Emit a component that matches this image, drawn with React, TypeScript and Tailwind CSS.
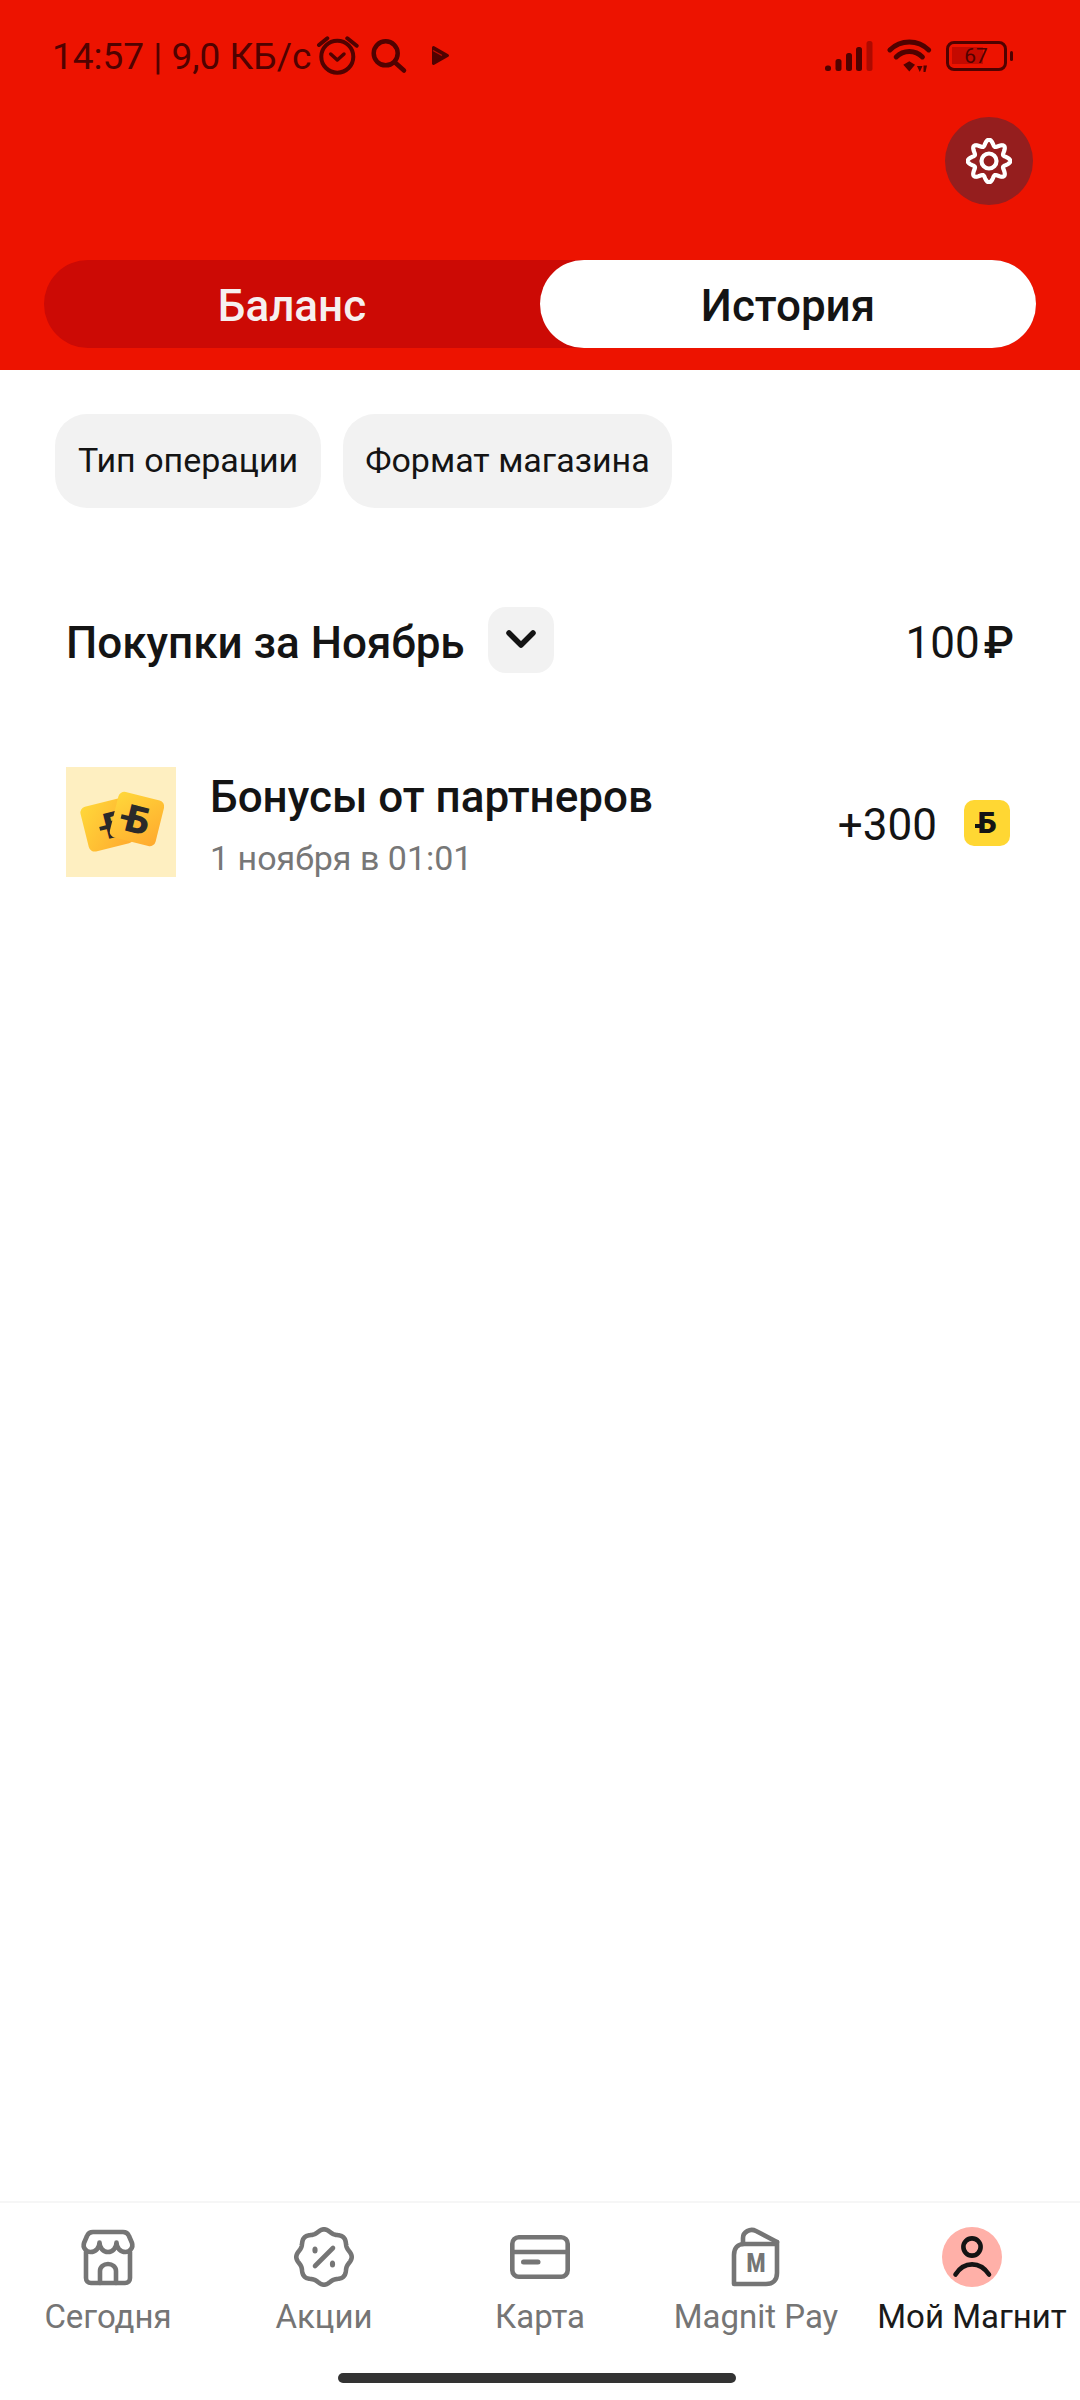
const wavy = (cx: number, cy: number, R: number, a: number, n: number) => {
  const pts: string[] = [];
  for (let i = 0; i < 240; i++) {
    const t = (i / 240) * Math.PI * 2;
    const r = R + a * Math.cos(n * t);
    pts.push(`${(cx + r * Math.sin(t)).toFixed(2)} ${(cy - r * Math.cos(t)).toFixed(2)}`);
  }
  return `M${pts.join("L")}Z`;
};

const DARK = "#500200";

function Alarm() {
  return (
    <svg width="44" height="44" viewBox="0 0 44 44" fill="none" stroke={DARK} strokeWidth="4" strokeLinecap="round" strokeLinejoin="round" className="ml-[4px]">
      <circle cx="22.3" cy="22.7" r="16" />
      <path d="M4 11L12.3 4.3M32.3 4.3L41.7 11.7" />
      <path d="M15.7 20L22.3 26L29 20" strokeWidth="3.5" />
    </svg>
  );
}
function Search() {
  return (
    <svg width="40" height="44" viewBox="0 0 40 44" fill="none" stroke={DARK} strokeWidth="4.5" strokeLinecap="round" className="ml-[10px]">
      <circle cx="16.7" cy="19.3" r="12" />
      <path d="M25.5 28L35 36.5" />
    </svg>
  );
}
function Play() {
  return (
    <svg width="22" height="44" viewBox="0 0 22 44" className="ml-[20px]">
      <path d="M4.5 13.5L18.5 21.5L4.5 29.5Z" fill={DARK} stroke={DARK} strokeWidth="3" strokeLinejoin="round" />
      <path d="M4 16.5L13 21.5" stroke="#c00c00" strokeWidth="1.4" />
    </svg>
  );
}
function Signal() {
  return (
    <svg width="48" height="30" viewBox="0 0 48 30" fill={DARK}>
      <rect x="0" y="24.5" width="6" height="5.5" rx="2.5" />
      <rect x="10.5" y="18" width="6" height="12" rx="2.5" />
      <rect x="21" y="12" width="6" height="18" rx="2.5" />
      <rect x="31" y="6" width="6" height="24" rx="2.5" />
      <rect x="41.5" y="0" width="6" height="30" rx="2.5" fill="#ad0a00" />
    </svg>
  );
}
function Wifi() {
  return (
    <svg width="50" height="40" viewBox="0 0 50 40" fill="none" stroke={DARK} strokeWidth="5" strokeLinecap="round" className="ml-[12px]">
      <path d="M4.9 13.9A27.5 27.5 0 0 1 43.7 13.9" />
      <path d="M11.2 20.9A18.5 18.5 0 0 1 37.4 20.9" />
      <path d="M18.3 28.8L24.3 25.3L30 28.8L24.3 35.5Z" fill={DARK} stroke="none" />
      <path d="M32 30H37.5L34.8 36Z M38.5 36V29.5H42L40.5 36Z" fill={DARK} stroke="none" />
    </svg>
  );
}
function Battery() {
  return (
    <div className="ml-[11px] flex items-center">
      <div className="relative flex h-[30px] w-[61px] items-center justify-center rounded-[8px] border-[3.5px] border-[#500200]">
        <div className="absolute left-[3px] top-[3px] h-[17px] w-[31px] bg-[#c40a00]" />
        <span className="relative text-[21px] leading-none font-normal text-[#500200]">67</span>
      </div>
      <div className="ml-[3px] h-[10px] w-[3.5px] rounded-full bg-[#500200]" />
    </div>
  );
}

function Gear() {
  return (
    <svg width="46" height="46" viewBox="0 0 46 46" fill="none" stroke="#ffffff" strokeWidth="4.2" strokeLinejoin="round">
      <path d={wavy(23, 23, 18.3, 3, 8)} />
      <circle cx="23" cy="23" r="7.5" />
    </svg>
  );
}

const GRAY = "#757575";

function Store() {
  return (
    <svg width="60" height="60" viewBox="0 0 60 60" fill="none" stroke={GRAY} strokeWidth="4.6" strokeLinecap="round" strokeLinejoin="round">
      <path d="M15 5H45C48 5 50 6.5 51 9L54 16C55.5 20.5 52 25 47.5 25C42.5 25 38.5 21 38.5 15.5C38.5 21 34.5 25 30 25C25.5 25 21.5 21 21.5 15.5C21.5 21 17.5 25 12.5 25C8 25 4.5 20.5 6 16L9 9C10 6.5 12 5 15 5Z" />
      <path d="M8 25V51C8 54 10 56 13 56H47C50 56 52 54 52 51V25" />
      <path d="M22 56V44C22 40 25.5 37 30 37C34.5 37 38 40 38 44V56" />
    </svg>
  );
}
function Percent() {
  return (
    <svg width="60" height="60" viewBox="0 0 60 60" fill="none" stroke={GRAY} strokeWidth="4.6" strokeLinecap="round" strokeLinejoin="round">
      <path d={wavy(30, 30, 26.2, 1.5, 8)} />
      <path d="M21 39L39 21" />
      <ellipse cx="21" cy="23" rx="2.6" ry="3.5" fill={GRAY} stroke="none" />
      <ellipse cx="38.5" cy="37" rx="2.6" ry="3.5" fill={GRAY} stroke="none" />
    </svg>
  );
}
function CardIcon() {
  return (
    <svg width="60" height="60" viewBox="0 0 60 60" fill="none" stroke={GRAY} strokeWidth="4.6" strokeLinecap="round">
      <rect x="2.3" y="10.3" width="55.4" height="39.4" rx="6.5" />
      <path d="M3 25H57" />
      <path d="M13.5 35H28" strokeWidth="5" />
    </svg>
  );
}
function Bag() {
  return (
    <svg width="60" height="60" viewBox="0 0 60 60" fill="none" stroke={GRAY} strokeWidth="4.6" strokeLinecap="round" strokeLinejoin="round">
      <path d="M51 15V46C51 53 47 57 40 57H8V28C8 21 12 17 18 17H51" />
      <path d="M17 17V11C17 5 24 1 30 4L51 15" />
      <text x="20.5" y="45" fontFamily="Roboto" fontWeight="900" fontSize="25" textLength="19" lengthAdjust="spacingAndGlyphs" fill={GRAY} stroke="none">
        М
      </text>
    </svg>
  );
}
function Person() {
  return (
    <div className="h-[60px] w-[60px] rounded-full bg-[#ffb0a8]">
      <svg width="60" height="60" viewBox="0 0 60 60" fill="none" stroke="#141414" strokeWidth="4.6" strokeLinecap="round">
        <circle cx="30" cy="20" r="8.6" />
        <path d="M13.5 47.5C22 34 38 34 47 47.5" />
      </svg>
    </div>
  );
}

function BonusArt() {
  return (
    <div className="h-[110px] w-[110px] shrink-0 bg-[#feefc1]">
      <svg width="110" height="110" viewBox="0 0 110 110">
        <defs>
          <linearGradient id="cardGrad" x1="0" y1="0" x2="1" y2="1">
            <stop offset="0" stopColor="#ffd83a" />
            <stop offset="1" stopColor="#ffa92e" />
          </linearGradient>
        </defs>
        <g transform="rotate(-14 41 58)">
          <rect x="18" y="35" width="46" height="46" rx="6" fill="url(#cardGrad)" />
          <text x="49" y="72" textAnchor="middle" fontFamily="Roboto" fontWeight="900" fontSize="36" fill="#2a2a2a">
            Б
          </text>
          <rect x="33" y="58" width="10" height="4" fill="#2a2a2a" />
        </g>
        <g transform="rotate(14 71 52)">
          <rect x="47.5" y="28.5" width="47" height="47" rx="6" fill="url(#cardGrad)" />
          <text x="72" y="66" textAnchor="middle" fontFamily="Roboto" fontWeight="900" fontSize="38" fill="#2a2a2a">
            Б
          </text>
          <rect x="55" y="51" width="10" height="4.5" fill="#2a2a2a" />
        </g>
      </svg>
    </div>
  );
}

function NavItem({ label, active, children }: { label: string; active?: boolean; children: React.ReactNode }) {
  return (
    <div className="flex flex-col items-center pt-[24px]">
      <div className="h-[60px] w-[60px]">{children}</div>
      <span className={`mt-[9px] whitespace-nowrap text-[33px] leading-[42px] ${active ? "text-[#1a1a1a]" : "text-[#757575]"}`}>{label}</span>
    </div>
  );
}

export default function App() {
  return (
    <div className="flex h-[2400px] w-[1080px] flex-col bg-white font-['Roboto',sans-serif] text-[#141414]">
      <header className="bg-[#ed1300] pb-[22px]">
        <div className="flex h-[112px] items-center pl-[52px] pr-[67px]">
          <span className="whitespace-nowrap text-[37px] leading-none text-[#500200]">14:57 | 9,0 КБ/с</span>
          <Alarm />
          <Search />
          <Play />
          <div className="ml-auto flex items-center">
            <Signal />
            <Wifi />
            <Battery />
          </div>
        </div>
        <div className="mt-[5px] flex justify-end pr-[47px]">
          <div className="flex h-[88px] w-[88px] items-center justify-center rounded-full bg-[#951e1e]">
            <Gear />
          </div>
        </div>
        <div className="mx-[44px] mt-[55px] flex h-[88px] rounded-full bg-[#cc0a05] text-[44px] font-medium">
          <div className="flex flex-1 items-center justify-center pt-[4px] text-[#f6efef]">Баланс</div>
          <div className="flex flex-1 items-center justify-center rounded-full bg-white pt-[4px] text-[#141414]">История</div>
        </div>
      </header>

      <main className="flex-1">
        <div className="ml-[55px] mt-[44px] flex gap-[22px]">
          <div className="flex h-[94px] items-center rounded-[32px] bg-[#f2f2f2] px-[23px] pb-[2px] text-[34px]">Тип операции</div>
          <div className="flex h-[94px] items-center rounded-[32px] bg-[#f2f2f2] px-[22px] pb-[2px] text-[34px]">Формат магазина</div>
        </div>

        <div className="mt-[99px] flex h-[66px] items-center pl-[66px] pr-[66px]">
          <span className="mt-[5px] text-[44px] font-medium leading-none">Покупки за Ноябрь</span>
          <div className="ml-[23px] flex h-[66px] w-[66px] items-center justify-center rounded-[18px] bg-[#f2f2f2]">
            <svg width="34" height="24" viewBox="0 0 34 24" fill="none" stroke="#141414" strokeWidth="5.5" strokeLinecap="round" strokeLinejoin="round">
              <path d="M5 5L17 17L29 5" />
            </svg>
          </div>
          <span className="ml-auto mt-[5px] flex items-baseline gap-[4px] text-[44px] leading-none">
            100<span className="font-medium">₽</span>
          </span>
        </div>

        <div className="ml-[66px] mr-[70px] mt-[94px] flex items-center">
          <BonusArt />
          <div className="ml-[34px] flex flex-col self-start pt-[5px]">
            <span className="text-[44px] font-medium leading-[50px]">Бонусы от партнеров</span>
            <span className="mt-[17px] text-[34px] leading-[38px] text-[#777777]">1 ноября в 01:01</span>
          </div>
          <span className="ml-auto mt-[6px] text-[44px] leading-none">+300</span>
          <div className="relative ml-[27px] mt-[2px] flex h-[46px] w-[46px] items-center justify-center rounded-[10px] bg-[#ffd733] text-[30px] font-black leading-none">
            Б
            <div className="absolute left-[11px] top-[24px] h-[3.5px] w-[7px] bg-[#141414]" />
          </div>
        </div>
      </main>

      <nav className="border-t-2 border-[#f6f6f6]">
        <div className="grid grid-cols-5">
          <NavItem label="Сегодня"><Store /></NavItem>
          <NavItem label="Акции"><Percent /></NavItem>
          <NavItem label="Карта"><CardIcon /></NavItem>
          <NavItem label="Magnit Pay"><Bag /></NavItem>
          <NavItem label="Мой Магнит" active><Person /></NavItem>
        </div>
        <div className="mt-[35px] flex justify-center pb-[17px] pr-[6px]">
          <div className="h-[10px] w-[398px] rounded-full bg-[#333333]" />
        </div>
      </nav>
    </div>
  );
}
